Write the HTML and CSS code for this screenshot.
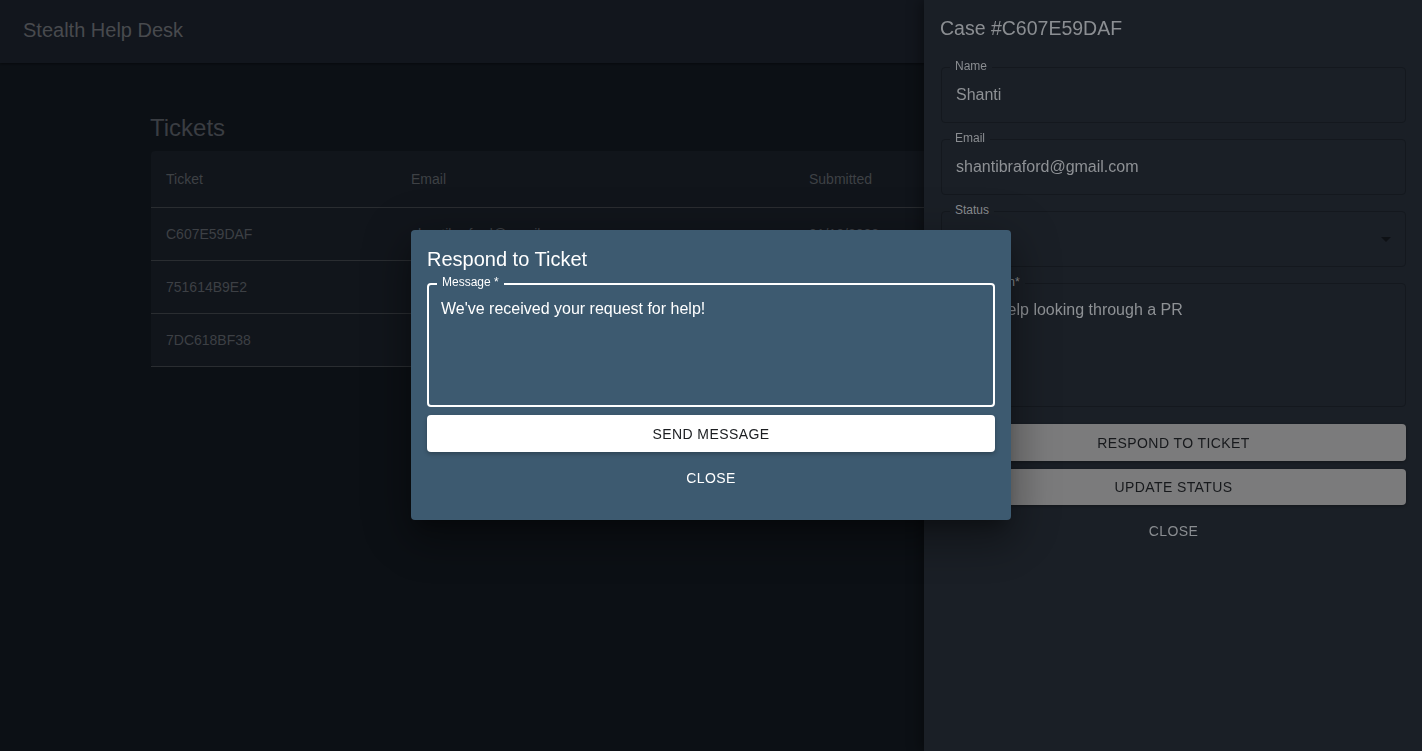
FILE: index.html
```html
<!DOCTYPE html>
<html>
<head>
<meta charset="utf-8">
<title>Stealth Help Desk</title>
<link rel="stylesheet" href="styles.css">
</head>
<body>
<header class="appbar">
  <div class="brand">Stealth Help Desk</div>
</header>
<main class="main">
  <h1 class="page-title">Tickets</h1>
  <div class="table-paper">
    <table class="tickets">
      <thead>
        <tr><th class="c1">Ticket</th><th class="c2">Email</th><th class="c3">Submitted</th></tr>
      </thead>
      <tbody>
        <tr><td>C607E59DAF</td><td>shantibraford@gmail.com</td><td>01/10/2023</td></tr>
        <tr><td>751614B9E2</td><td></td><td></td></tr>
        <tr><td>7DC618BF38</td><td></td><td></td></tr>
      </tbody>
    </table>
  </div>
</main>

<aside class="drawer">
  <h2 class="case-title">Case #C607E59DAF</h2>
  <div class="field">
    <span class="field-label">Name</span>
    <div class="field-value">Shanti</div>
  </div>
  <div class="field">
    <span class="field-label">Email</span>
    <div class="field-value">shantibraford@gmail.com</div>
  </div>
  <div class="field">
    <span class="field-label">Status</span>
    <div class="field-value select">
      <span></span>
      <svg class="caret" width="10" height="5" viewBox="0 0 10 5"><path d="M0 0 L5 5 L10 0 Z" fill="#0e1115"/></svg>
    </div>
  </div>
  <div class="field multiline">
    <span class="field-label">Description*</span>
    <div class="field-value">Need help looking through a PR</div>
  </div>
  <button class="btn-gray">RESPOND TO TICKET</button>
  <button class="btn-gray">UPDATE STATUS</button>
  <button class="btn-text dim">CLOSE</button>
</aside>

<div class="backdrop">
  <div class="modal">
    <h3 class="modal-title">Respond to Ticket</h3>
    <div class="msg-field">
      <span class="msg-label">Message *</span>
      <div class="msg-value">We've received your request for help!</div>
    </div>
    <button class="btn-white">SEND MESSAGE</button>
    <button class="btn-text light">CLOSE</button>
  </div>
</div>
</body>
</html>
```

FILE: styles.css
```css
* { box-sizing: border-box; }
html, body { margin: 0; padding: 0; }
body {
  width: 1422px;
  height: 751px;
  overflow: hidden;
  background: #0c1015;
  font-family: "Liberation Sans", Arial, sans-serif;
}
.appbar {
  height: 63px;
  background: #12161d;
  display: flex;
  align-items: center;
  padding-left: 23px;
  box-shadow: 0 1px 2px rgba(0,0,0,0.4);
}
.brand {
  font-size: 20px;
  color: #484a4e;
  margin-top: -3px;
}
.main {
  padding: 0 150px 0 150px;
}
.page-title {
  margin: 51px 0 0 0;
  font-size: 24px;
  font-weight: normal;
  color: #3a3d42;
  line-height: 28px;
  height: 37px;
}
.table-paper {
  background: #11151b;
  border-radius: 4px;
  margin-left: 1px;
  width: 1121px;
}
.tickets {
  width: 100%;
  border-collapse: collapse;
  font-size: 14px;
}
.tickets th {
  text-align: left;
  font-weight: normal;
  color: #3e4145;
  height: 56px;
  padding: 0 15px;
  border-bottom: 1px solid #2a2d31;
}
.tickets td {
  color: #3d4045;
  height: 53px;
  padding: 0 15px;
  border-bottom: 1px solid #2a2d31;
}
.tickets .c1 { width: 245px; }
.tickets .c2 { width: 398px; }

.drawer {
  position: fixed;
  top: 0;
  right: 0;
  width: 498px;
  height: 751px;
  background: #1a1f26;
  padding: 0 16px;
  display: flex;
  flex-direction: column;
  box-shadow: -4px 0 12px rgba(0,0,0,0.35);
}
.case-title {
  margin: 16px 0 0 0;
  font-size: 19.5px;
  font-weight: normal;
  color: #8b8e92;
  line-height: 24px;
  height: 51px;
}
.field {
  position: relative;
  height: 56px;
  border: 1px solid #14181e;
  border-radius: 4px;
  margin-left: 1px;
  margin-bottom: 16px;
}
.field.multiline {
  height: 124px;
  margin-bottom: 17px;
}
.field-label {
  position: absolute;
  top: -9px;
  left: 8px;
  padding: 0 5px;
  background: #1a1f26;
  font-size: 12px;
  line-height: 14px;
  color: #8a8d91;
}
.field-value {
  padding: 17px 14px 0 14px;
  font-size: 16px;
  line-height: 20px;
  color: #8e9195;
}
.field.multiline .field-value { padding-top: 16px; }
.field-value.select {
  display: flex;
  justify-content: space-between;
  align-items: center;
  height: 54px;
  padding-top: 0;
}
.caret { margin-right: 0; }

.btn-gray {
  display: block;
  width: 465px;
  margin-left: 1px;
  height: 37px;
  border: none;
  border-radius: 4px;
  background: #7b7b7c;
  color: #17191c;
  font-family: "Liberation Sans", Arial, sans-serif;
  font-size: 14px;
  letter-spacing: 0.4px;
  margin-bottom: 8px;
  box-shadow: 0 1px 3px rgba(0,0,0,0.3);
}
.btn-gray + .btn-gray { height: 36px; margin-bottom: 8px; }
.btn-text {
  display: block;
  background: none;
  border: none;
  height: 36px;
  width: 100%;
  font-family: "Liberation Sans", Arial, sans-serif;
  font-size: 14px;
  letter-spacing: 0.4px;
}
.btn-text.dim { color: #8a8d91; width: 465px; margin-left: 1px; }
.btn-text.light { color: #ffffff; }

.backdrop {
  position: fixed;
  inset: 0;
  display: flex;
  align-items: center;
  justify-content: center;
  padding-bottom: 1px;
}
.modal {
  width: 600px;
  height: 290px;
  background: #3d5a70;
  border-radius: 4px;
  padding: 16px 16px;
  box-shadow: 0 11px 15px -7px rgba(0,0,0,0.3), 0 24px 38px 3px rgba(0,0,0,0.2), 0 9px 46px 8px rgba(0,0,0,0.18);
  display: flex;
  flex-direction: column;
}
.modal-title {
  margin: 0;
  font-size: 20px;
  font-weight: normal;
  color: #ffffff;
  line-height: 26px;
  height: 37px;
}
.msg-field {
  position: relative;
  height: 124px;
  border: 2px solid #ffffff;
  border-radius: 4px;
}
.msg-label {
  position: absolute;
  top: -9px;
  left: 8px;
  padding: 0 5px;
  background: #3d5a70;
  font-size: 12px;
  line-height: 12px;
  color: #ffffff;
}
.msg-value {
  padding: 14px 12px 0 12px;
  font-size: 16px;
  line-height: 20px;
  color: #ffffff;
}
.btn-white {
  margin-top: 8px;
  height: 37px;
  border: none;
  border-radius: 4px;
  background: #ffffff;
  color: #1b1d20;
  font-family: "Liberation Sans", Arial, sans-serif;
  font-size: 14px;
  letter-spacing: 0.4px;
  box-shadow: 0 2px 4px rgba(0,0,0,0.25);
}
.modal .btn-text { margin-top: 8px; }
```
